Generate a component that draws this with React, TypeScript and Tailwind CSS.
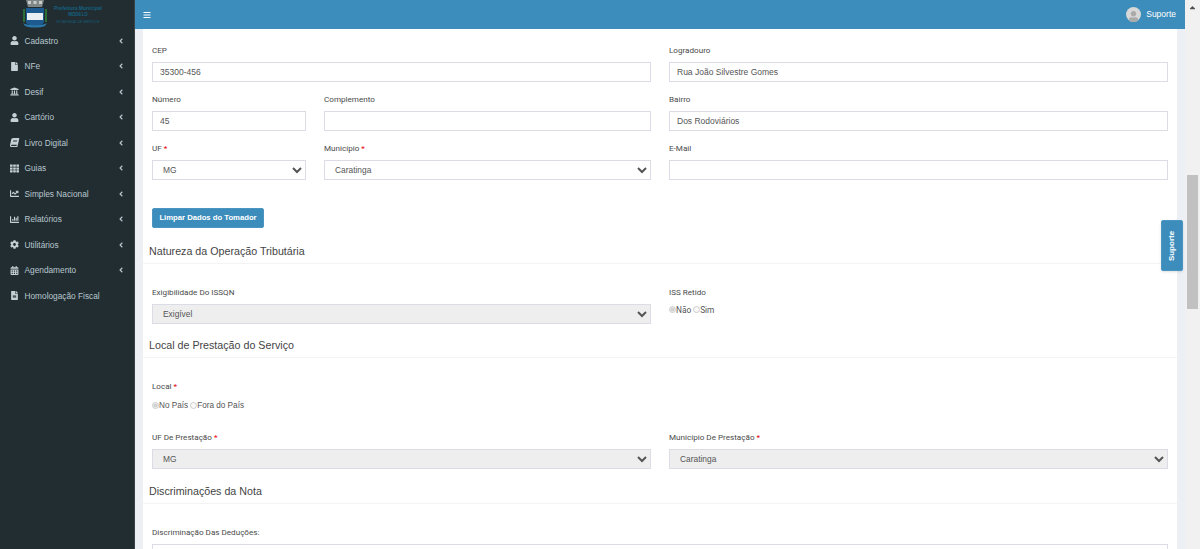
import React from 'react';
import {
  FaAngleLeft,
  FaBars,
  FaBook,
  FaCalendarAlt,
  FaCaretUp,
  FaChartBar,
  FaChartLine,
  FaCog,
  FaFile,
  FaFileAlt,
  FaTh,
  FaUniversity,
  FaUser,
} from 'react-icons/fa';

const menu = [
  { label: 'Cadastro', icon: FaUser, arrow: true },
  { label: 'NFe', icon: FaFile, arrow: true },
  { label: 'Desif', icon: FaUniversity, arrow: true },
  { label: 'Cartório', icon: FaUser, arrow: true },
  { label: 'Livro Digital', icon: FaBook, arrow: true },
  { label: 'Guias', icon: FaTh, arrow: true },
  { label: 'Simples Nacional', icon: FaChartLine, arrow: true },
  { label: 'Relatórios', icon: FaChartBar, arrow: true },
  { label: 'Utilitários', icon: FaCog, arrow: true },
  { label: 'Agendamento', icon: FaCalendarAlt, arrow: true },
  { label: 'Homologação Fiscal', icon: FaFileAlt, arrow: false },
];

const Crest = () => (
  <svg width="24" height="29" viewBox="0 0 24 29" className="shrink-0">
    <path d="M3 0h18l-2 7H5z" fill="#7f8886" />
    <path d="M5 1h3v3H5zM10.500 1h3v3h-3zM16 1h3v3h-3z" fill="#c9cdcb" />
    <path d="M0 9h2v13H0zM22 9h2v13h-2z" fill="#2c6e38" />
    <path d="M3 8h18v14c0 2-5 4-9 5-4-1-9-3-9-5z" fill="#1c5a90" />
    <rect x="4" y="13" width="16" height="7" fill="#e8eef2" />
    <path d="M0 23c4 3 20 3 24 0l-2 3c-5 2-15 2-20 0z" fill="#2b77a8" />
  </svg>
);

const Label = ({ text, required }: { text: string; required?: boolean }) => (
  <label className="block h-[13px] font-['Roboto',sans-serif] text-[8.1px] leading-[13px] text-[#4a4a4a]">
    {text}
    {required && <span className="text-red-600"> *</span>}
  </label>
);

const Input = ({ value }: { value?: string }) => (
  <input
    readOnly
    value={value ?? ''}
    className="mt-[5px] block h-[20px] w-full border border-[#dcdce6] bg-white px-[7px] font-['Liberation_Sans',sans-serif] text-[8.5px] text-[#555] outline-none"
  />
);

const Select = ({ value, disabled }: { value: string; disabled?: boolean }) => (
  <select
    disabled={disabled}
    defaultValue={value}
    className={`mt-[5px] block h-[20px] w-full border border-[#dcdce6] px-[6px] font-['Liberation_Sans',sans-serif] text-[8.4px] text-[#555] outline-none ${
      disabled ? 'bg-[#eeeeee]' : 'bg-white'
    }`}
  >
    <option>{value}</option>
  </select>
);

const Radio = ({ text, checked }: { text: string; checked?: boolean }) => (
  <span className="mr-[2px] inline-flex items-center">
    <input type="radio" disabled defaultChecked={checked} className="m-0 -mt-[2px] h-[7px] w-[7px]" />
    {text}
  </span>
);

const Section = ({ title }: { title: string }) => (
  <div className="-mx-[9px] border-b border-[#f4f4f4] px-[6px] pb-[2px]">
    <h2 className="h-[20px] font-['Liberation_Sans',sans-serif] text-[10.7px] leading-[20px] text-[#444]">{title}</h2>
  </div>
);

export default function App() {
  return (
    <div className="flex h-[549px] w-[1200px] overflow-hidden bg-[#ecf0f5] font-['Roboto',sans-serif]">
      <aside className="w-[135px] shrink-0 border-r border-[#3a4448] bg-[#222d32]">
        <div className="flex h-[28px] items-start gap-[5px] overflow-hidden pl-[23px]">
          <Crest />
          <div className="w-[52px] pt-[5px] text-center font-['Liberation_Sans',sans-serif] font-bold text-[#14607f]">
            <div className="h-[6px] text-[5px] leading-[6px]">Prefeitura Municipal</div>
            <div className="mt-[1px] h-[6px] text-[4.5px] leading-[6px]">MODELO</div>
            <div className="mt-[2px] h-[5px] text-[3.2px] font-normal leading-[5px]">NOTA FISCAL DE SERVIÇOS</div>
          </div>
        </div>
        <nav>
          {menu.map((item) => (
            <div key={item.label} className="flex h-[25.5px] items-center pl-[9px] pr-[10px] text-[8.3px] text-[#b8c7ce]">
              <span className="flex w-[10px] shrink-0 justify-center">
                <item.icon
                  className={`h-[9px] w-[9px] text-[#c4d0d5] ${item.icon === FaBook ? '-skew-x-12' : ''}`}
                />
              </span>
              <span className="ml-[5.5px] flex-1 font-['Liberation_Sans',sans-serif]">{item.label}</span>
              {item.arrow && <FaAngleLeft className="h-[8px] w-[6px] text-[#b8c7ce]" />}
            </div>
          ))}
        </nav>
      </aside>

      <div className="relative flex min-w-0 flex-1 flex-col">
        <header className="flex h-[29px] shrink-0 items-center justify-between bg-[#3c8dbc] pl-[8px] pr-[9px] font-['Liberation_Sans',sans-serif] text-white">
          <FaBars className="h-[8px] w-[8px]" />
          <div className="flex items-center gap-[5px] text-[8.5px]">
            <span className="flex h-[15px] w-[15px] items-end justify-center overflow-hidden rounded-full bg-[#d8d8d8]">
              <FaUser className="h-[11px] w-[11px] text-[#aaaaaa]" />
            </span>
            Suporte
          </div>
        </header>

        <main className="mx-[8px] min-h-0 flex-1 overflow-hidden bg-white px-[9px] pt-[15px]">
          <div className="grid grid-cols-[499px_499px] gap-x-[18px] gap-y-[11px]">
            <div>
              <Label text="CEP" />
              <Input value="35300-456" />
            </div>
            <div>
              <Label text="Logradouro" />
              <Input value="Rua João Silvestre Gomes" />
            </div>
            <div className="grid grid-cols-[154px_327px] gap-x-[18px]">
              <div>
                <Label text="Número" />
                <Input value="45" />
              </div>
              <div>
                <Label text="Complemento" />
                <Input />
              </div>
            </div>
            <div>
              <Label text="Bairro" />
              <Input value="Dos Rodoviários" />
            </div>
            <div className="grid grid-cols-[154px_327px] gap-x-[18px]">
              <div>
                <Label text="UF" required />
                <Select value="MG" />
              </div>
              <div>
                <Label text="Município" required />
                <Select value="Caratinga" />
              </div>
            </div>
            <div>
              <Label text="E-Mail" />
              <Input />
            </div>
          </div>

          <button className="mt-[28px] block h-[20px] w-[112px] rounded-[2px] border border-[#4a95c2] bg-[#3c8dbc] font-['Liberation_Sans',sans-serif] text-[7.7px] font-bold text-white">
            Limpar Dados do Tomador
          </button>

          <div className="mt-[13px]">
            <Section title="Natureza da Operação Tributária" />
          </div>
          <div className="mt-[22px] grid grid-cols-[499px_499px] gap-x-[18px]">
            <div>
              <Label text="Exigibilidade Do ISSQN" />
              <Select value="Exigível" disabled />
            </div>
            <div>
              <Label text="ISS Retido" />
              <div className="mt-[5px] flex h-[12px] items-center text-[8.3px] text-[#555]">
                <Radio text="Não" checked />
                <Radio text="Sim" />
              </div>
            </div>
          </div>

          <div className="mt-[11px]">
            <Section title="Local de Prestação do Serviço" />
          </div>
          <div className="mt-[22px]">
            <Label text="Local" required />
            <div className="mt-[7px] flex h-[12px] items-center font-['Liberation_Sans',sans-serif] text-[8.2px] text-[#555]">
              <Radio text="No País" checked />
              <Radio text="Fora do País" />
            </div>
          </div>
          <div className="mt-[19px] grid grid-cols-[499px_499px] gap-x-[18px]">
            <div>
              <Label text="UF De Prestação" required />
              <Select value="MG" disabled />
            </div>
            <div>
              <Label text="Município De Prestação" required />
              <Select value="Caratinga" disabled />
            </div>
          </div>

          <div className="mt-[12px]">
            <Section title="Discriminações da Nota" />
          </div>
          <div className="mt-[22px]">
            <Label text="Discriminação Das Deduções:" />
            <textarea readOnly className="mt-[5px] block h-[60px] w-full resize-none border border-[#dcdce6] bg-white" />
          </div>
        </main>

        <div className="absolute right-[2px] top-[220px] flex h-[51px] w-[22px] items-center justify-center rounded-[2px] border border-[#4a95c2] bg-[#3c8dbc] shadow-sm">
          <span className="-rotate-90 font-['Liberation_Sans',sans-serif] text-[8px] font-bold text-white">Suporte</span>
        </div>
      </div>

      <div className="flex w-[15px] shrink-0 flex-col items-center bg-[#f1f1f1] px-[2px]">
        <div className="flex h-[175px] w-full justify-center pt-[3px]">
          <FaCaretUp className="h-[9px] w-[9px] text-[#505050]" />
        </div>
        <div className="h-[134px] w-full bg-[#c1c1c1]" />
      </div>
    </div>
  );
}
